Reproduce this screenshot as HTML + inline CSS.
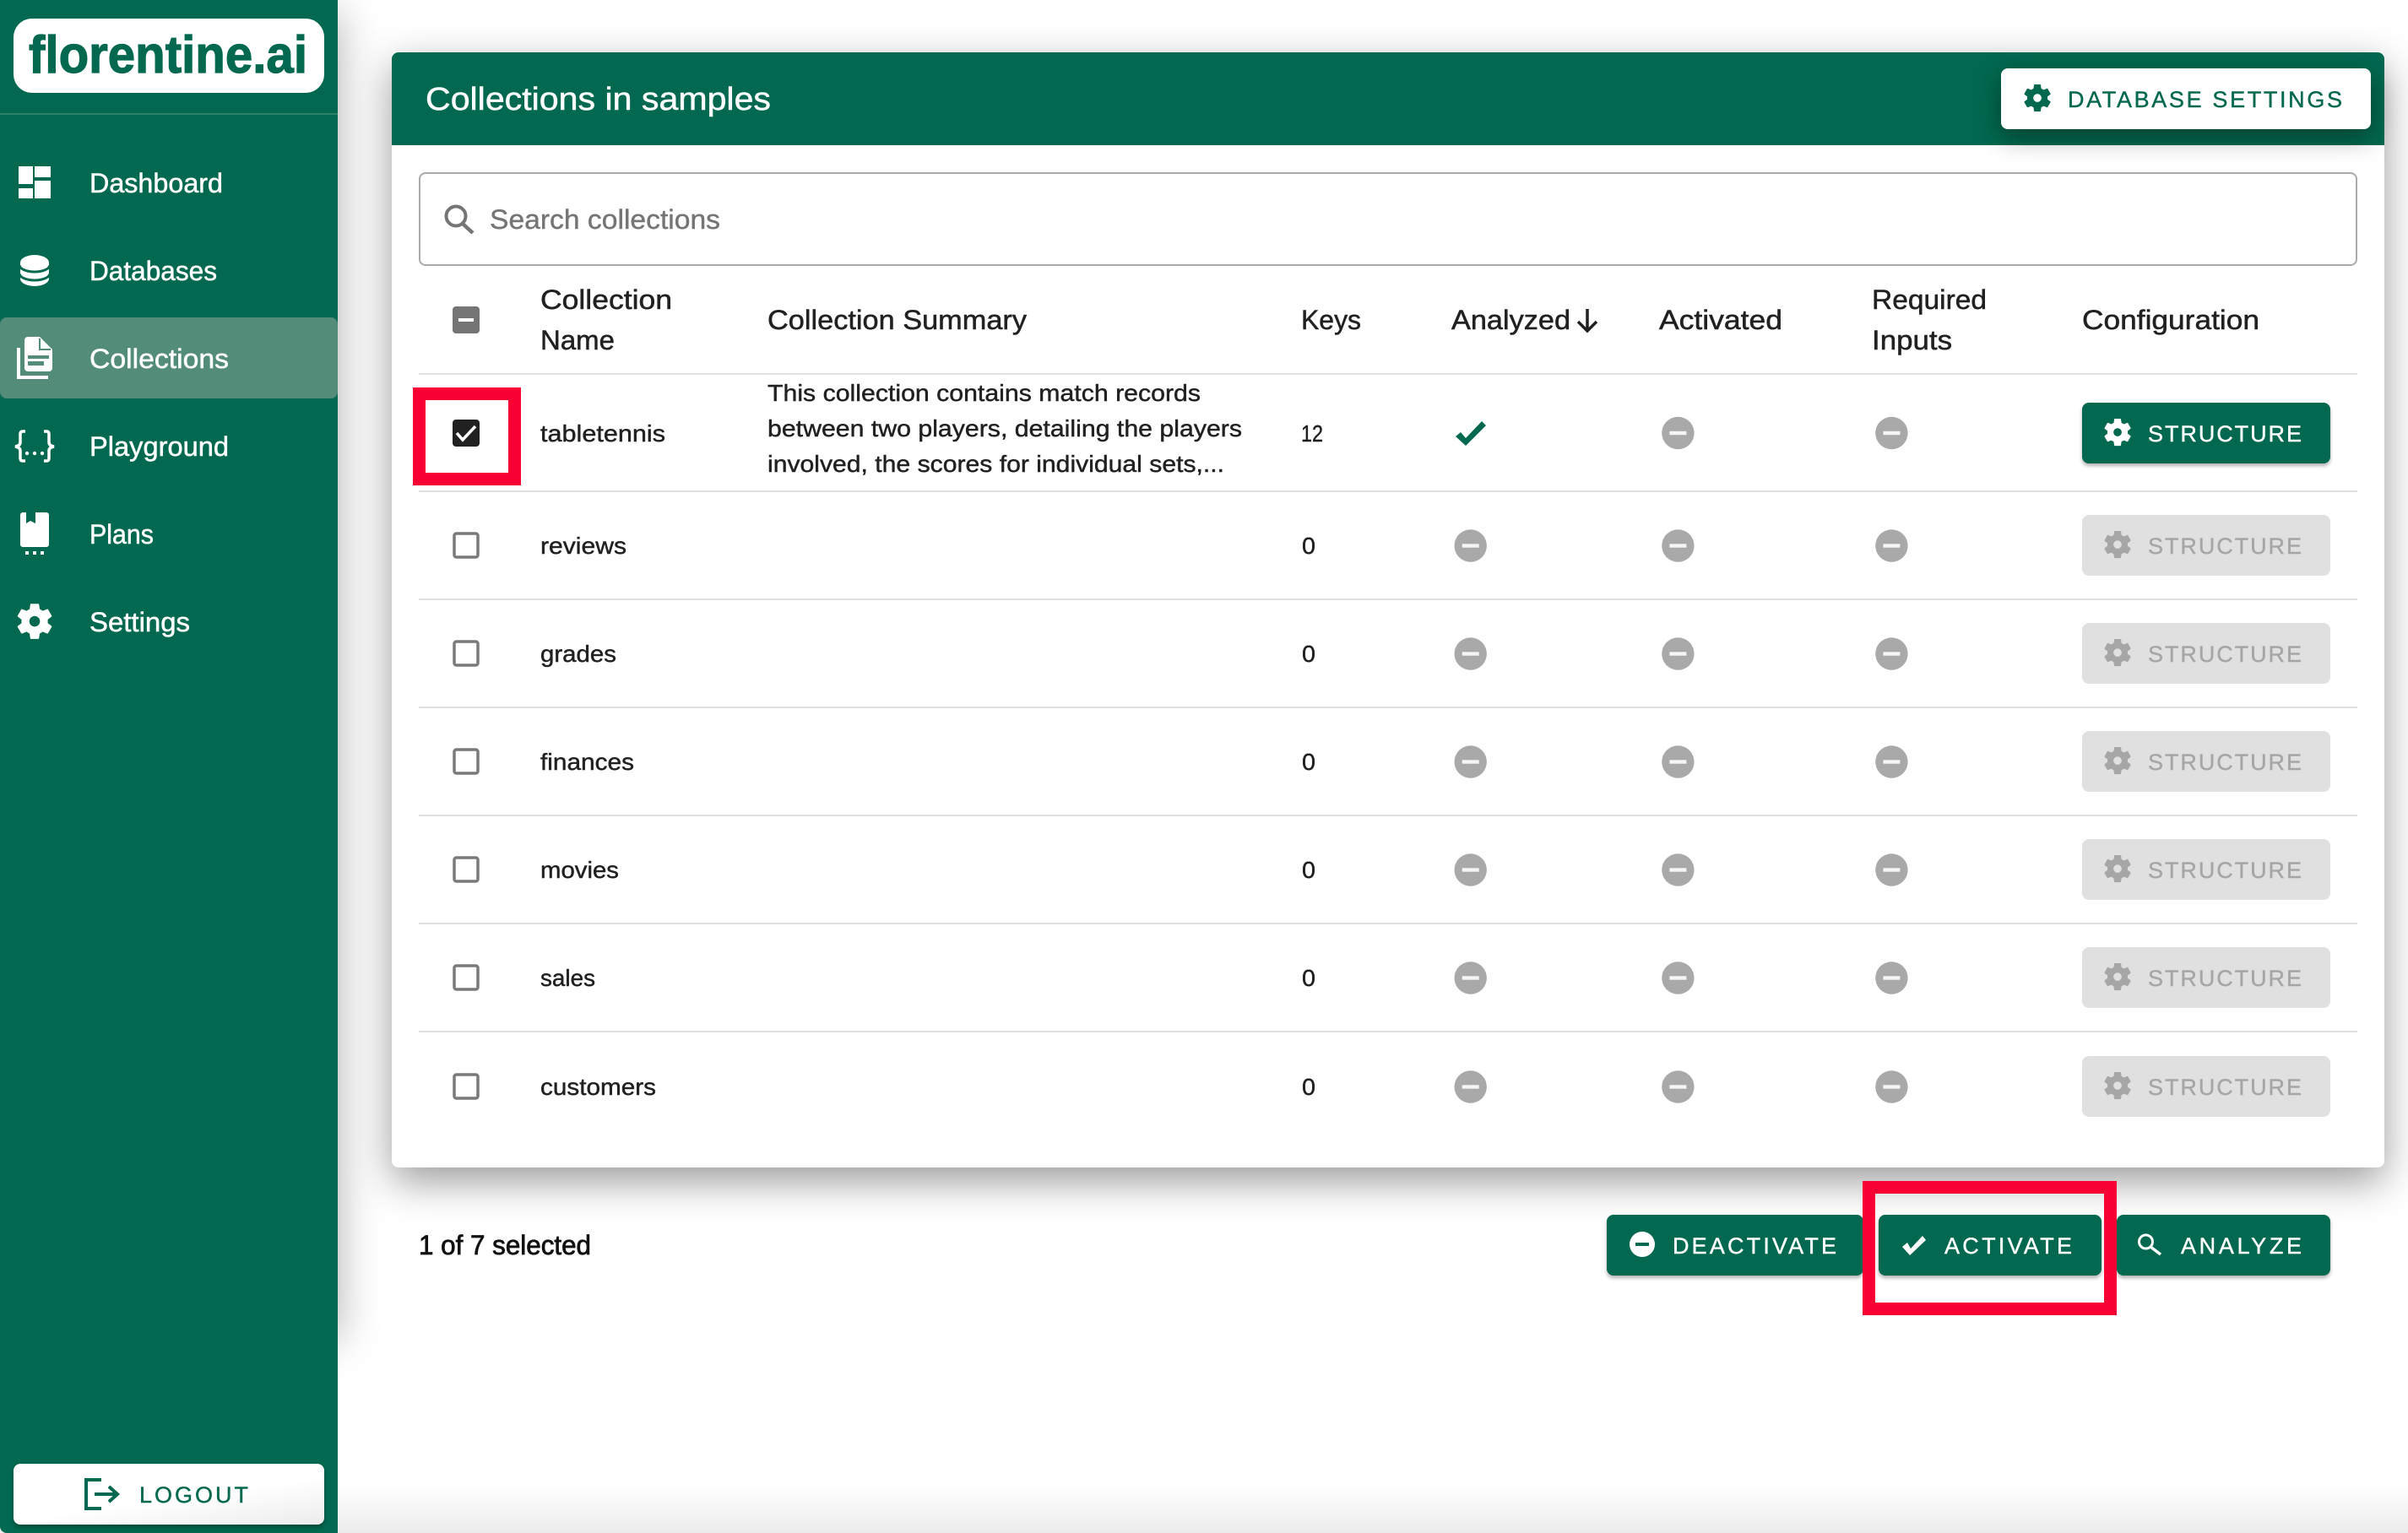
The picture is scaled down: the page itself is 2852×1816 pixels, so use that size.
<!DOCTYPE html>
<html lang="en">
<head>
<meta charset="utf-8">
<title>florentine.ai - Collections</title>
<style>
html,body{margin:0;padding:0;background:#fff;}
body{position:relative;width:2852px;height:1816px;overflow:hidden;font-family:"Liberation Sans",sans-serif;}
.a{position:absolute;box-sizing:border-box;}
svg{position:absolute;left:0;top:0;}
svg text{font-family:"Liberation Sans",sans-serif;}
.g{background:#02684f;}
.btn{background:#02684f;border-radius:8px;box-shadow:0 3px 4px rgba(0,0,0,.3);height:72px;}
.dis{background:#e0e0e0;border-radius:8px;height:72px;left:2466px;width:294px;}
.sep{left:496px;width:2296px;height:2px;background:#e0e0e0;}
.red{border:15px solid #f90035;}
</style>
</head>
<body>
<div class="a" style="left:0;top:1740px;width:2852px;height:76px;background:linear-gradient(#fff 0%,#fefefe 30%,#ececec 100%);"></div>
<div class="a" style="left:0;top:0;width:400px;height:1570px;box-shadow:0 16px 48px rgba(0,0,0,.32);"></div>
<div class="a g" style="left:0;top:0;width:400px;height:1816px;border-bottom-left-radius:8px;"></div>
<div class="a" style="left:0;top:1800px;width:10px;height:16px;background:#000;z-index:-1;"></div>
<div class="a" style="left:16px;top:22px;width:368px;height:88px;background:#fff;border-radius:22px;"></div>
<div class="a" style="left:0;top:134px;width:400px;height:2px;background:#2f8069;"></div>
<div class="a" style="left:0;top:376px;width:400px;height:96px;background:#538c78;border-radius:8px;"></div>
<div class="a" style="left:16px;top:1734px;width:368px;height:72px;border-radius:8px;background:linear-gradient(172deg,#fff 55%,#ececec 100%);box-shadow:0 3px 5px rgba(0,0,0,.3);"></div>

<div class="a" style="left:464px;top:62px;width:2360px;height:1321px;background:#fff;border-radius:8px;box-shadow:0 16px 48px rgba(0,0,0,.4);"></div>
<div class="a g" style="left:464px;top:62px;width:2360px;height:110px;border-radius:8px 8px 0 0;"></div>
<div class="a" style="left:2370px;top:81px;width:438px;height:72px;background:#fff;border-radius:8px;box-shadow:0 10px 30px rgba(0,0,0,.38);"></div>
<div class="a" style="left:496px;top:204px;width:2296px;height:111px;border:2.5px solid #aaa;border-radius:8px;background:#fff;"></div>

<div class="a sep" style="top:442px;"></div>
<div class="a sep" style="top:581px;"></div>
<div class="a sep" style="top:709px;"></div>
<div class="a sep" style="top:837px;"></div>
<div class="a sep" style="top:965px;"></div>
<div class="a sep" style="top:1093px;"></div>
<div class="a sep" style="top:1221px;"></div>

<div class="a btn" style="left:2466px;top:477px;width:294px;"></div>
<div class="a dis" style="top:610px;"></div>
<div class="a dis" style="top:738px;"></div>
<div class="a dis" style="top:866px;"></div>
<div class="a dis" style="top:994px;"></div>
<div class="a dis" style="top:1122px;"></div>
<div class="a dis" style="top:1251px;"></div>

<div class="a btn" style="left:1903px;top:1439px;width:304px;"></div>
<div class="a btn" style="left:2225px;top:1439px;width:264px;"></div>
<div class="a btn" style="left:2507px;top:1439px;width:253px;"></div>

<svg width="2852" height="1816" viewBox="0 0 2852 1816" xmlns="http://www.w3.org/2000/svg">
<defs>
<path id="gear" d="M19.14 12.94c.04-.3.06-.61.06-.94 0-.32-.02-.64-.07-.94l2.03-1.58c.18-.14.23-.41.12-.61l-1.92-3.32c-.12-.22-.37-.29-.59-.22l-2.39.96c-.5-.38-1.03-.7-1.62-.94l-.36-2.54c-.04-.24-.24-.41-.48-.41h-3.84c-.24 0-.43.17-.47.41l-.36 2.54c-.59.24-1.13.57-1.62.94l-2.39-.96c-.22-.08-.47 0-.59.22L2.74 8.87c-.12.21-.08.47.12.61l2.03 1.58c-.05.3-.09.63-.09.94s.02.64.07.94l-2.03 1.58c-.18.14-.23.41-.12.61l1.92 3.32c.12.22.37.29.59.22l2.39-.96c.5.38 1.03.7 1.62.94l.36 2.54c.05.24.24.41.48.41h3.84c.24 0 .44-.17.47-.41l.36-2.54c.59-.24 1.13-.56 1.62-.94l2.39.96c.22.08.47 0 .59-.22l1.92-3.32c.12-.22.07-.47-.12-.61l-2.01-1.58zM12 14.9c-1.6 0-2.9-1.3-2.9-2.9s1.3-2.9 2.9-2.9 2.9 1.3 2.9 2.9-1.3 2.9-2.9 2.9z"/>
<g id="minus"><circle r="19.2" fill="#a9a9a9"/><rect x="-10" y="-2.2" width="20" height="4.4" fill="#f5f5f5"/></g>
<g id="cb"><rect x="-14" y="-14" width="28" height="28" rx="2.5" fill="#fff" stroke="#7a7a7a" stroke-width="3.5"/></g>
</defs>

<!-- logo -->
<text x="34" y="86" font-size="62" font-weight="700" fill="#02684f" stroke="#02684f" stroke-width="1.2" textLength="330" lengthAdjust="spacingAndGlyphs">florentine.ai</text>

<!-- sidebar icons -->
<g fill="#fff">
<rect x="22" y="197" width="17" height="21"/><rect x="22" y="223" width="17" height="12"/><rect x="41" y="197" width="19" height="13"/><rect x="41" y="214" width="19" height="21"/>
<path d="M24 311a17 9 0 0 1 34 0v19a17 9 0 0 1-34 0z"/>
<path d="M23 314a18 8 0 0 0 36 0M23 324a18 8 0 0 0 36 0" fill="none" stroke="#02684f" stroke-width="3"/>
<path d="M33 399H47L62 414V436a4 4 0 0 1-4 4H33a4 4 0 0 1-4-4V403a4 4 0 0 1 4-4z"/>
<path d="M47 401V414H60" fill="none" stroke="#538c78" stroke-width="2"/>
<rect x="33" y="421" width="25" height="4" fill="#538c78"/><rect x="33" y="428" width="19" height="5" fill="#538c78"/>
<path d="M22 412V447H57" fill="none" stroke="#fff" stroke-width="4"/>
<path d="M30 511H27Q24 511 24 514V524Q24 528 18 529Q24 530 24 534V543Q24 546 27 546H30M52 511H55Q58 511 58 514V524Q58 528 64 529Q58 530 58 534V543Q58 546 55 546H52" fill="none" stroke="#fff" stroke-width="3.5"/>
<circle cx="32" cy="537" r="2.2"/><circle cx="41" cy="537" r="2.2"/><circle cx="50" cy="537" r="2.2"/>
<path d="M27 607H31V620L36 617L42 620V607H55a3 3 0 0 1 3 3V645a3 3 0 0 1-3 3H27a3 3 0 0 1-3-3V610a3 3 0 0 1 3-3z"/>
<rect x="30" y="653" width="4" height="4"/><rect x="39" y="653" width="4" height="4"/><rect x="48" y="653" width="4" height="4"/>
<use href="#gear" transform="translate(15 710) scale(2.17)"/>
</g>

<!-- sidebar labels -->
<g fill="#fff" stroke="#fff" stroke-width=".5" font-size="32">
<text x="106" y="228" textLength="158" lengthAdjust="spacingAndGlyphs">Dashboard</text>
<text x="106" y="332" textLength="151" lengthAdjust="spacingAndGlyphs">Databases</text>
<text x="106" y="436" textLength="165" lengthAdjust="spacingAndGlyphs">Collections</text>
<text x="106" y="540" textLength="165" lengthAdjust="spacingAndGlyphs">Playground</text>
<text x="106" y="644" textLength="76" lengthAdjust="spacingAndGlyphs">Plans</text>
<text x="106" y="748" textLength="119" lengthAdjust="spacingAndGlyphs">Settings</text>
</g>

<!-- logout -->
<path d="M120 1753H102V1787H120M112 1770H138M129 1761L139 1770L129 1779" fill="none" stroke="#02684f" stroke-width="4"/>
<text x="165" y="1780" font-size="27" fill="#02684f" stroke="#02684f" stroke-width=".4" textLength="129" lengthAdjust="spacing">LOGOUT</text>

<!-- header -->
<text x="504" y="130" font-size="38" fill="#fff" stroke="#fff" stroke-width=".5" textLength="409" lengthAdjust="spacingAndGlyphs">Collections in samples</text>
<use href="#gear" transform="translate(2393 96) scale(1.67)" fill="#02684f"/>
<text x="2449" y="127" font-size="27" fill="#02684f" stroke="#02684f" stroke-width=".4" textLength="325" lengthAdjust="spacing">DATABASE SETTINGS</text>

<!-- search -->
<circle cx="540" cy="256" r="11.5" fill="none" stroke="#757575" stroke-width="4"/>
<path d="M548 265L560 276" stroke="#757575" stroke-width="4.5"/>
<text x="580" y="271" font-size="32" fill="#757575" stroke="#757575" stroke-width=".4" textLength="273" lengthAdjust="spacingAndGlyphs">Search collections</text>

<!-- table head -->
<rect x="536" y="363" width="32" height="32" rx="4" fill="#757575"/>
<rect x="543" y="377" width="18" height="4" fill="#fff"/>
<g font-size="32" fill="#212121" stroke="#212121" stroke-width=".5">
<text x="640" y="366" textLength="156" lengthAdjust="spacingAndGlyphs">Collection</text>
<text x="640" y="414" textLength="88" lengthAdjust="spacingAndGlyphs">Name</text>
<text x="909" y="390" textLength="307" lengthAdjust="spacingAndGlyphs">Collection Summary</text>
<text x="1541" y="390" textLength="71" lengthAdjust="spacingAndGlyphs">Keys</text>
<text x="1719" y="390" textLength="141" lengthAdjust="spacingAndGlyphs">Analyzed</text>
<text x="1965" y="390" textLength="146" lengthAdjust="spacingAndGlyphs">Activated</text>
<text x="2217" y="366" textLength="136" lengthAdjust="spacingAndGlyphs">Required</text>
<text x="2217" y="414" textLength="95" lengthAdjust="spacingAndGlyphs">Inputs</text>
<text x="2466" y="390" textLength="210" lengthAdjust="spacingAndGlyphs">Configuration</text>
</g>
<path d="M1880 366V391M1869 381L1880 392L1891 381" fill="none" stroke="#212121" stroke-width="3.5"/>

<!-- row checkboxes -->
<rect x="536" y="497" width="32" height="32" rx="4" fill="#212121"/>
<path d="M541 513L548 521L563 505" fill="none" stroke="#fff" stroke-width="3.5"/>
<use href="#cb" x="552" y="646"/><use href="#cb" x="552" y="774"/><use href="#cb" x="552" y="902"/><use href="#cb" x="552" y="1030"/><use href="#cb" x="552" y="1158"/><use href="#cb" x="552" y="1287"/>

<!-- row text -->
<g font-size="28" fill="#212121" stroke="#212121" stroke-width=".45">
<text x="640" y="523" textLength="148" lengthAdjust="spacingAndGlyphs">tabletennis</text>
<text x="640" y="656" textLength="102" lengthAdjust="spacingAndGlyphs">reviews</text>
<text x="640" y="784" textLength="90" lengthAdjust="spacingAndGlyphs">grades</text>
<text x="640" y="912" textLength="111" lengthAdjust="spacingAndGlyphs">finances</text>
<text x="640" y="1040" textLength="93" lengthAdjust="spacingAndGlyphs">movies</text>
<text x="640" y="1168" textLength="65" lengthAdjust="spacingAndGlyphs">sales</text>
<text x="640" y="1297" textLength="137" lengthAdjust="spacingAndGlyphs">customers</text>
<text x="909" y="475" textLength="513" lengthAdjust="spacingAndGlyphs">This collection contains match records</text>
<text x="909" y="517" textLength="562" lengthAdjust="spacingAndGlyphs">between two players, detailing the players</text>
<text x="909" y="559" textLength="541" lengthAdjust="spacingAndGlyphs">involved, the scores for individual sets,...</text>
<text x="1541" y="523" textLength="26" lengthAdjust="spacingAndGlyphs">12</text>
<text x="1542" y="656" textLength="16" lengthAdjust="spacingAndGlyphs">0</text>
<text x="1542" y="784" textLength="16" lengthAdjust="spacingAndGlyphs">0</text>
<text x="1542" y="912" textLength="16" lengthAdjust="spacingAndGlyphs">0</text>
<text x="1542" y="1040" textLength="16" lengthAdjust="spacingAndGlyphs">0</text>
<text x="1542" y="1168" textLength="16" lengthAdjust="spacingAndGlyphs">0</text>
<text x="1542" y="1297" textLength="16" lengthAdjust="spacingAndGlyphs">0</text>
</g>

<!-- status icons -->
<path d="M1724 517L1730 512L1736 519L1755 499L1760 504L1736 528z" fill="#02684f"/>
<use href="#minus" x="1987.4" y="513"/><use href="#minus" x="2240.4" y="513"/>
<use href="#minus" x="1741.7" y="646.5"/><use href="#minus" x="1987.4" y="646.5"/><use href="#minus" x="2240.4" y="646.5"/>
<use href="#minus" x="1741.7" y="774.5"/><use href="#minus" x="1987.4" y="774.5"/><use href="#minus" x="2240.4" y="774.5"/>
<use href="#minus" x="1741.7" y="902.5"/><use href="#minus" x="1987.4" y="902.5"/><use href="#minus" x="2240.4" y="902.5"/>
<use href="#minus" x="1741.7" y="1030.5"/><use href="#minus" x="1987.4" y="1030.5"/><use href="#minus" x="2240.4" y="1030.5"/>
<use href="#minus" x="1741.7" y="1158.5"/><use href="#minus" x="1987.4" y="1158.5"/><use href="#minus" x="2240.4" y="1158.5"/>
<use href="#minus" x="1741.7" y="1287.5"/><use href="#minus" x="1987.4" y="1287.5"/><use href="#minus" x="2240.4" y="1287.5"/>

<!-- structure buttons -->
<use href="#gear" transform="translate(2488 492) scale(1.67)" fill="#fff"/>
<text x="2544" y="523" font-size="27" fill="#fff" stroke="#fff" stroke-width=".4" textLength="182" lengthAdjust="spacing">STRUCTURE</text>
<g fill="#a6a6a6" stroke="#a6a6a6" stroke-width=".4" font-size="27">
<use href="#gear" stroke="none" transform="translate(2488 625) scale(1.67)"/>
<text x="2544" y="656" textLength="182" lengthAdjust="spacing">STRUCTURE</text>
<use href="#gear" stroke="none" transform="translate(2488 753) scale(1.67)"/>
<text x="2544" y="784" textLength="182" lengthAdjust="spacing">STRUCTURE</text>
<use href="#gear" stroke="none" transform="translate(2488 881) scale(1.67)"/>
<text x="2544" y="912" textLength="182" lengthAdjust="spacing">STRUCTURE</text>
<use href="#gear" stroke="none" transform="translate(2488 1009) scale(1.67)"/>
<text x="2544" y="1040" textLength="182" lengthAdjust="spacing">STRUCTURE</text>
<use href="#gear" stroke="none" transform="translate(2488 1137) scale(1.67)"/>
<text x="2544" y="1168" textLength="182" lengthAdjust="spacing">STRUCTURE</text>
<use href="#gear" stroke="none" transform="translate(2488 1266) scale(1.67)"/>
<text x="2544" y="1297" textLength="182" lengthAdjust="spacing">STRUCTURE</text>
</g>

<!-- footer -->
<text x="496" y="1486" font-size="32" fill="#111" stroke="#111" stroke-width=".8" textLength="204" lengthAdjust="spacingAndGlyphs">1 of 7 selected</text>
<circle cx="1945" cy="1474" r="15" fill="#fff"/><rect x="1937" y="1472" width="16" height="4" fill="#02684f"/>
<text x="1981" y="1485" font-size="27" fill="#fff" stroke="#fff" stroke-width=".4" textLength="194" lengthAdjust="spacing">DEACTIVATE</text>
<path d="M2253 1477L2259 1472L2263 1479L2277 1464L2281 1469L2262 1487z" fill="#fff"/>
<text x="2303" y="1485" font-size="27" fill="#fff" stroke="#fff" stroke-width=".4" textLength="151" lengthAdjust="spacing">ACTIVATE</text>
<circle cx="2541.5" cy="1471" r="8" fill="none" stroke="#fff" stroke-width="3"/>
<path d="M2547 1477L2559 1486" stroke="#fff" stroke-width="3.5"/>
<text x="2583" y="1485" font-size="27" fill="#fff" stroke="#fff" stroke-width=".4" textLength="143" lengthAdjust="spacing">ANALYZE</text>
</svg>

<div class="a red" style="left:489px;top:459px;width:128px;height:116px;"></div>
<div class="a red" style="left:2206px;top:1399px;width:301px;height:159px;"></div>
</body>
</html>
